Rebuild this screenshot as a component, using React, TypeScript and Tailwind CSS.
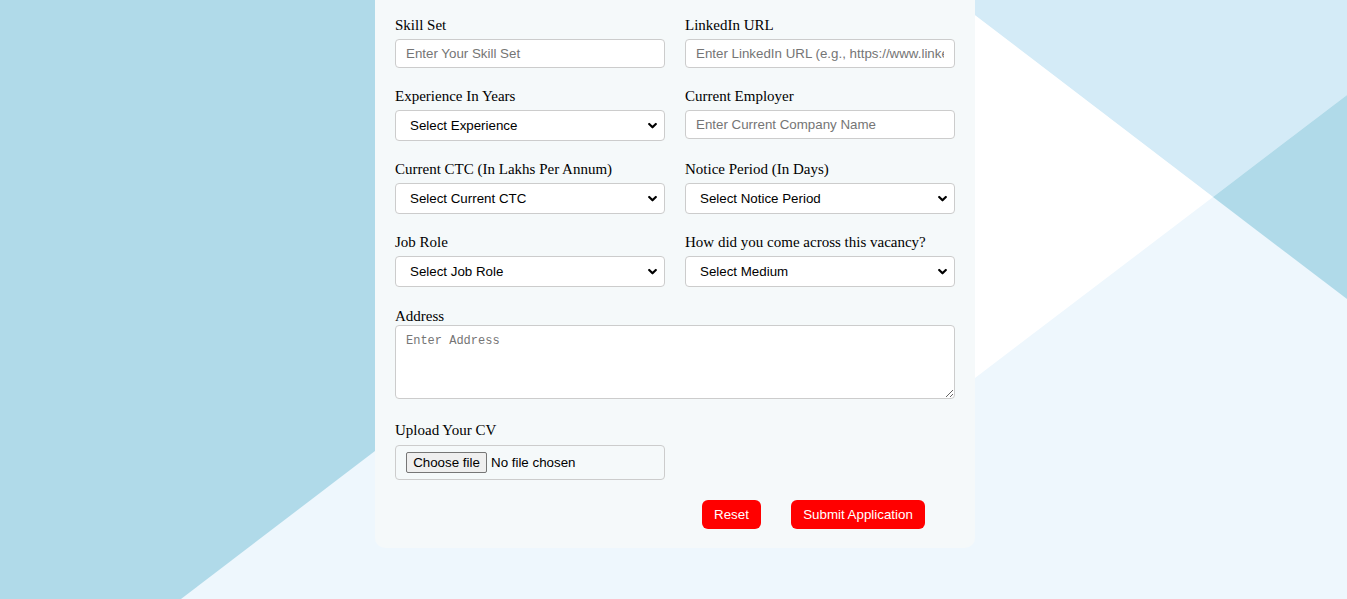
import React from "react";

const labelCls =
  "block font-['Liberation_Serif','Times_New_Roman',serif] text-[15px] leading-[18px] text-black";
const inputCls =
  "block w-full h-[29px] rounded-[4px] border border-[#cccccc] bg-white px-[10px] font-['Liberation_Sans',Arial,sans-serif] text-[13.333px] text-black placeholder:text-[#757575] outline-none";

function Chevron() {
  return (
    <svg
      className="pointer-events-none absolute right-[8px] top-1/2 -translate-y-1/2"
      width="9"
      height="7"
      viewBox="0 0 9 7"
      fill="none"
    >
      <path d="M1.2 1.5 L4.5 4.8 L7.8 1.5" stroke="#000" strokeWidth="2.2" strokeLinecap="round" strokeLinejoin="round" />
    </svg>
  );
}

function Select({ text }: { text: string }) {
  return (
    <div className="relative">
      <select
        defaultValue=""
        className="block w-full h-[31px] appearance-none rounded-[4px] border border-[#cccccc] bg-white pl-[14px] pr-[24px] font-['Liberation_Sans',Arial,sans-serif] text-[13.333px] text-black outline-none"
      >
        <option value="">{text}</option>
      </select>
      <Chevron />
    </div>
  );
}

function Field({ label, children }: { label: string; children: React.ReactNode }) {
  return (
    <div>
      <label className={`${labelCls} mb-[5px]`}>{label}</label>
      {children}
    </div>
  );
}

export default function App() {
  return (
    <div className="relative h-[599px] w-full overflow-hidden bg-[#eef7fd]">
      <svg
        className="absolute inset-0"
        width="1347"
        height="599"
        viewBox="0 0 1347 599"
        preserveAspectRatio="none"
      >
        <polygon points="0,0 620,0 620,264 181,599 0,599" fill="#b0dae9" />
        <polygon points="955,0 1347,0 1347,95 1213,197" fill="#d4ebf7" />
        <polygon points="760,0 955,0 1213,197 975,378 760,541" fill="#ffffff" />
        <polygon points="1347,95 1213,197 1347,299" fill="#b0dae9" />
      </svg>

      <div className="relative flex justify-center pl-[3px]">
        <div className="w-[600px] rounded-b-[10px] bg-[#f5f9fa] px-[20px] pt-[16px] pb-[19px]">
          <div className="grid grid-cols-2 gap-x-[20px]">
            <Field label="Skill Set">
              <input className={inputCls} placeholder="Enter Your Skill Set" />
            </Field>
            <Field label="LinkedIn URL">
              <input
                className={inputCls}
                placeholder="Enter LinkedIn URL (e.g., https://www.linkedin.com/in/yourprofile)"
              />
            </Field>
          </div>

          <div className="mt-[19px] grid grid-cols-2 gap-x-[20px]">
            <Field label="Experience In Years">
              <Select text="Select Experience" />
            </Field>
            <Field label="Current Employer">
              <input className={inputCls} placeholder="Enter Current Company Name" />
            </Field>
          </div>

          <div className="mt-[19px] grid grid-cols-2 gap-x-[20px]">
            <Field label="Current CTC (In Lakhs Per Annum)">
              <Select text="Select Current CTC" />
            </Field>
            <Field label="Notice Period (In Days)">
              <Select text="Select Notice Period" />
            </Field>
          </div>

          <div className="mt-[19px] grid grid-cols-2 gap-x-[20px]">
            <Field label="Job Role">
              <Select text="Select Job Role" />
            </Field>
            <Field label="How did you come across this vacancy?">
              <Select text="Select Medium" />
            </Field>
          </div>

          <div className="mt-[20px]">
            <label className={`${labelCls}`}>Address</label>
            <textarea
              className="block h-[74px] w-full rounded-[4px] border border-[#cccccc] bg-white px-[10px] py-[7px] font-['Liberation_Mono','DejaVu_Sans_Mono',monospace] text-[12px] leading-[16px] text-black placeholder:text-[#757575] outline-none"
              placeholder="Enter Address"
            />
          </div>

          <div className="mt-[22px]">
            <label className={`${labelCls} mb-[6px]`}>Upload Your CV</label>
            <label className="flex h-[35px] w-[270px] cursor-pointer items-center rounded-[4px] border border-[#cccccc] px-[10px] font-['Liberation_Sans',Arial,sans-serif] text-[13.333px] text-black">
              <input type="file" className="hidden" />
              <span className="flex h-[21px] w-[81px] items-center justify-center rounded-[2px] border border-[#767676] bg-[#efefef]">
                Choose file
              </span>
              <span className="ml-[4px]">No file chosen</span>
            </label>
          </div>

          <div className="mt-[20px] flex justify-end gap-[30px] pr-[30px]">
            <button className="h-[29px] w-[59px] rounded-[6px] bg-[#ff0000] font-['Liberation_Sans',Arial,sans-serif] text-[13.333px] text-white">
              Reset
            </button>
            <button className="h-[29px] w-[134px] rounded-[6px] bg-[#ff0000] font-['Liberation_Sans',Arial,sans-serif] text-[13.333px] text-white">
              Submit Application
            </button>
          </div>
        </div>
      </div>
    </div>
  );
}
